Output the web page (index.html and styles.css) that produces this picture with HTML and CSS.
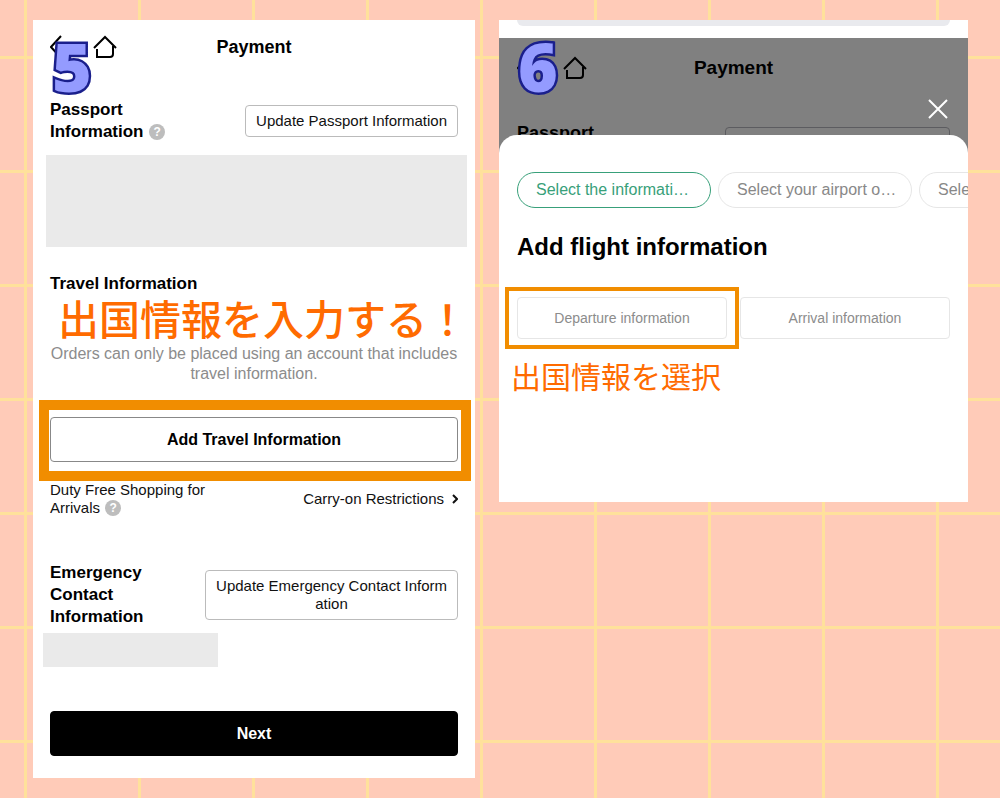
FILE: index.html
```html
<!DOCTYPE html>
<html lang="en">
<head>
<meta charset="utf-8">
<meta name="viewport" content="width=device-width, initial-scale=1">
<title>Payment</title>
<link rel="stylesheet" href="styles.css">
</head>
<body>
<main class="board">
  <section class="screen screen-payment">
    <span class="step">5</span>
    <header class="topbar">
      <div class="topbar-nav">
        <button class="icon-btn" type="button" aria-label="Back"><svg class="back" viewBox="0 0 12 24"><path d="M11 1 1 12l10 11"/></svg></button>
        <button class="icon-btn" type="button" aria-label="Home"><svg class="home" viewBox="0 0 24 24"><path d="M1 13 12 2l11 11M4 14v8h13q3 0 3-3v-8"/></svg></button>
      </div>
      <h1 class="title">Payment</h1>
    </header>

    <div class="row row-passport">
      <h2 class="heading">Passport<br>Information <span class="help">?</span></h2>
      <button class="outline-btn" type="button">Update Passport Information</button>
    </div>
    <div class="redacted redacted-passport"></div>

    <h2 class="heading heading-travel">Travel Information</h2>
    <p class="note note-large" lang="ja">出国情報を入力する！</p>
    <p class="hint">Orders can only be placed using an account that includes travel information.</p>
    <div class="highlight">
      <button class="wide-btn" type="button">Add Travel Information</button>
    </div>
    <div class="row row-duty">
      <p class="duty">Duty Free Shopping for<br>Arrivals <span class="help">?</span></p>
      <a class="more" href="#carry-on">Carry-on Restrictions <svg class="chevron" viewBox="0 0 6 10"><path d="m1 1 4 4-4 4"/></svg></a>
    </div>

    <div class="row row-emergency">
      <h2 class="heading">Emergency<br>Contact<br>Information</h2>
      <button class="outline-btn outline-btn-tall" type="button">Update Emergency Contact Information</button>
    </div>
    <div class="redacted redacted-contact"></div>
    <button class="wide-btn wide-btn-dark" type="button">Next</button>
  </section>

  <section class="screen screen-flight">
    <span class="step">6</span>
    <div class="browser"><div class="address"></div></div>
    <div class="backdrop">
      <header class="topbar topbar-large">
        <div class="topbar-nav">
          <button class="icon-btn" type="button" aria-label="Back"><svg class="back" viewBox="0 0 12 24"><path d="M11 1 1 12l10 11"/></svg></button>
          <button class="icon-btn" type="button" aria-label="Home"><svg class="home" viewBox="0 0 24 24"><path d="M1 13 12 2l11 11M4 14v8h13q3 0 3-3v-8"/></svg></button>
        </div>
        <h1 class="title">Payment</h1>
      </header>
      <div class="behind">
        <h2 class="behind-heading">Passport</h2>
        <div class="behind-box"></div>
      </div>
      <button class="icon-btn close" type="button" aria-label="Close"><svg viewBox="0 0 20 20"><path d="m1 1 18 18M19 1 1 19"/></svg></button>
    </div>
    <div class="sheet">
      <div class="chips">
        <button class="chip chip-active" type="button">Select the informati…</button>
        <button class="chip" type="button">Select your airport o…</button>
        <button class="chip" type="button">Select</button>
      </div>
      <h2 class="sheet-title">Add flight information</h2>
      <div class="choices">
        <button class="choice choice-marked" type="button">Departure information</button>
        <button class="choice" type="button">Arrival information</button>
      </div>
      <p class="note note-small" lang="ja">出国情報を選択</p>
    </div>
  </section>
</main>
</body>
</html>
```

FILE: styles.css
```css
* {
  box-sizing: border-box;
}

body {
  margin: 0;
  min-height: 100vh;
  font-family: "Liberation Sans", Arial, sans-serif;
  color: #000;
  background-color: #ffcbb8;
  background-image:
    linear-gradient(#ffe19b 3px, transparent 3px),
    linear-gradient(90deg, #ffe19b 3px, transparent 3px);
  background-size: 114px 114px;
  background-position: 24px 56px;
}

h1, h2, p {
  margin: 0;
}

button {
  font-family: inherit;
  color: inherit;
  background: none;
  border: 0;
  padding: 0;
}

svg {
  display: block;
  fill: none;
  stroke: currentColor;
}

.board {
  display: grid;
  grid-template-columns: minmax(0, 442fr) minmax(0, 469fr);
  align-items: start;
  gap: 24px;
  padding: 20px 32px 20px 33px;
}

.screen {
  position: relative;
  background: #fff;
}

.screen-payment {
  padding: 0 17px 22px;
}

.screen-flight {
  overflow: hidden;
}

/* Step number stuck over the corner of each screen */
.step {
  position: absolute;
  z-index: 2;
  top: 10px;
  left: 19px;
  font: 800 68px/72px "Open Sans", sans-serif;
  color: #949bff;
  -webkit-text-stroke: 5px #1a1f8c;
  stroke-linejoin: round;
  paint-order: stroke fill;
}

.topbar {
  display: grid;
  grid-template-columns: 1fr auto 1fr;
  align-items: center;
  height: 54px;
}

.topbar-large {
  height: 60px;
}

.topbar-nav {
  display: flex;
  align-items: center;
  gap: 31px;
}

.topbar-large .topbar-nav {
  gap: 34px;
}

.title {
  font-size: 18px;
  line-height: 22px;
}

.topbar-large .title {
  font-size: 19px;
}

.back {
  width: 12px;
  height: 24px;
  stroke-width: 2;
}

.home {
  width: 24px;
  height: 24px;
  stroke-width: 2;
}

.row {
  display: flex;
  justify-content: space-between;
  align-items: center;
}

.row-passport {
  margin-top: 25px;
}

.heading {
  font-size: 17px;
  line-height: 22px;
}

.heading-travel {
  margin-top: 26px;
}

.help {
  display: inline-block;
  width: 16px;
  height: 16px;
  margin: 1px 0 0 1px;
  border-radius: 50%;
  font-size: 12px;
  font-weight: 700;
  line-height: 16px;
  text-align: center;
  vertical-align: top;
  color: #fff;
  background: #bdbdbd;
}

.heading .help {
  margin-top: 3px;
}

.outline-btn {
  padding: 6px 10px;
  border: 1px solid #bbb;
  border-radius: 4px;
  font-size: 15px;
  line-height: 18px;
  color: #111;
}

.outline-btn-tall {
  width: 62%;
  padding: 6px 8px;
  word-break: break-all;
}

.redacted {
  background: #eaeaea;
}

.redacted-passport {
  height: 92px;
  margin: 12px -9px 0 -4px;
}

.redacted-contact {
  width: 43%;
  height: 34px;
  margin: 5px 0 0 -7px;
}

.note {
  font-family: "Noto Sans CJK JP", sans-serif;
  color: #ff6b00;
  white-space: nowrap;
}

.note-large {
  margin: 0 -10px 5px 8px;
  font-size: 41px;
  font-weight: 500;
  line-height: 44px;
}

.note-small {
  margin: 21px 0 0 -6px;
  font-size: 30px;
  line-height: 30px;
}

.hint {
  font-size: 16px;
  line-height: 20px;
  text-align: center;
  color: #8c8c8c;
}

.highlight {
  margin: 16px -13px 0 -11px;
  padding: 7px 3px 9px 1px;
  border: 10px solid #f18d00;
}

.wide-btn {
  display: block;
  width: 100%;
  height: 45px;
  border: 1px solid #888;
  border-radius: 4px;
  font-size: 16px;
  font-weight: 700;
}

.wide-btn-dark {
  margin-top: 44px;
  border-color: #000;
  color: #fff;
  background: #000;
}

.duty,
.more {
  font-size: 15px;
  line-height: 18px;
  color: #111;
}

.more {
  display: flex;
  align-items: center;
  gap: 8px;
  text-decoration: none;
}

.chevron {
  width: 6px;
  height: 10px;
  stroke-width: 2;
}

.row-emergency {
  margin-top: 45px;
}

.browser {
  padding: 0 18px 12px;
}

.address {
  height: 6px;
  border-radius: 0 0 18px 18px;
  background: #e9eaee;
}

/* Page dimmed behind the sheet */
.backdrop {
  position: relative;
  height: 115px;
  padding: 0 18px;
  overflow: hidden;
  background: #808080;
}

.behind {
  display: flex;
  justify-content: space-between;
  align-items: flex-start;
  padding-top: 24px;
}

.behind-heading {
  font-size: 18px;
  line-height: 22px;
}

.behind-box {
  width: 52%;
  height: 32px;
  margin-top: 5px;
  border: 1px solid #5c5c60;
  border-radius: 4px;
}

.close {
  position: absolute;
  top: 61px;
  right: 20px;
  color: #fff;
}

.close svg {
  width: 20px;
  height: 20px;
  stroke-width: 2;
}

.sheet {
  position: relative;
  margin-top: -18px;
  padding: 37px 18px 112px;
  border-radius: 18px 18px 0 0;
  background: #fff;
}

.chips {
  display: flex;
  gap: 7px;
  margin-right: -18px;
  overflow: hidden;
}

.chip {
  flex: 0 0 194px;
  height: 36px;
  padding: 0 0 0 18px;
  border: 1px solid #e6e6e6;
  border-radius: 18px;
  font-size: 16px;
  text-align: left;
  white-space: nowrap;
  color: #888;
}

.chip-active {
  border-color: #38a07a;
  color: #38a07a;
}

.sheet-title {
  margin-top: 24px;
  font-size: 24px;
  line-height: 30px;
}

.choices {
  display: grid;
  grid-template-columns: 1fr 1fr;
  gap: 13px;
  margin-top: 35px;
}

.choice {
  position: relative;
  height: 42px;
  border: 1px solid #e6e6e6;
  border-radius: 4px;
  font-size: 14px;
  color: #8c8c8c;
}

.choice-marked::after {
  content: "";
  position: absolute;
  inset: -11px -13px;
  border: 4px solid #f18d00;
}
```
